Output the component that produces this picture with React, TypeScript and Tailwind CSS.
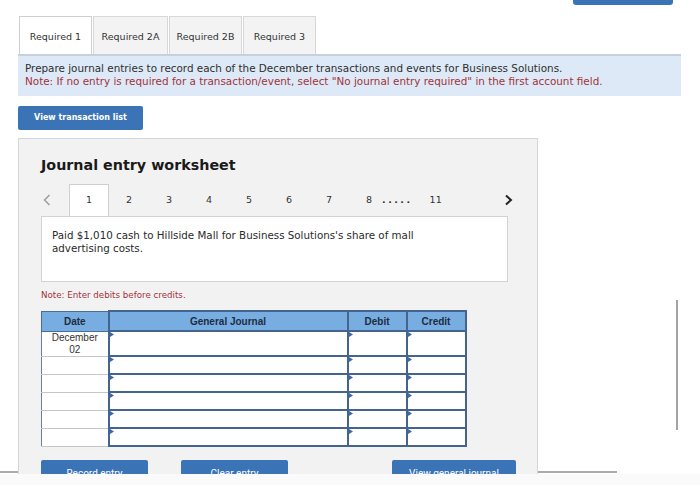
import React from "react";

const tabs = ["Required 1", "Required 2A", "Required 2B", "Required 3"];
const tabWidths = ["w-[73px]", "w-[75px]", "w-[73px]", "w-[73px]"];

function Marker() {
  return (
    <svg className="absolute left-0 top-0" width="4" height="5" viewBox="0 0 4 5">
      <path d="M0 0 L4 2.5 L0 5 Z" fill="#3b6aa8" />
    </svg>
  );
}

function InputCell({ h }: { h: string }) {
  return (
    <td className={`relative border-2 border-[#45648d] bg-white p-0 ${h}`}>
      <Marker />
    </td>
  );
}

export default function App() {
  const rows = [
    { h: "h-[25px]", date: true },
    { h: "h-[18px]", date: false },
    { h: "h-[18px]", date: false },
    { h: "h-[18px]", date: false },
    { h: "h-[18px]", date: false },
    { h: "h-[18px]", date: false },
  ];

  return (
    <div className="w-[700px] h-[485px] bg-white overflow-hidden font-['DejaVu_Sans',Verdana,sans-serif] text-[#333]">
      <div className="relative h-[474px] overflow-hidden">
        {/* background rules */}
        <div className="absolute left-0 top-[471px] w-[617px] h-[2px] bg-[#ababab]" />
        <div className="absolute left-[676px] top-[300px] w-[2px] h-[130px] bg-[#a3a3a3]" />

        {/* top right button stub */}
        <div className="flex justify-end pr-[27px]">
          <div className="w-[100px] h-[5px] bg-[#3a73b6] rounded-b-[3px]" />
        </div>

        {/* Tabs */}
        <div className="flex gap-[1px] pl-[19px] mt-[11px]">
          {tabs.map((t, i) => (
            <div
              key={t}
              className={`${tabWidths[i]} h-[38px] flex items-center justify-center pt-[3px] text-[9.5px] border border-b-0 ${
                i === 0 ? "bg-white border-[#cfcfcf]" : "bg-[#f3f3f3] border-[#d8d8d8]"
              }`}
            >
              {t}
            </div>
          ))}
        </div>

        {/* Instructions */}
        <div className="ml-[18px] w-[663px] h-[42px] bg-[#dde9f6] border-t-2 border-[#c7d1dc] pl-[7px] pt-[6px] text-[10.4px] leading-[13px]">
          <div className="text-[#2f2f2f]">
            Prepare journal entries to record each of the December transactions and events for Business Solutions.
          </div>
          <div className="text-[#a3323a]">
            Note: If no entry is required for a transaction/event, select "No journal entry required" in the first account field.
          </div>
        </div>

        <div className="ml-[18px] mt-[10px] w-[125px] h-[24px] bg-[#3a73b6] rounded-[2px] flex items-center justify-center text-white font-bold text-[8px]">
          View transaction list
        </div>

        {/* Worksheet panel */}
        <div className="relative z-10 ml-[18px] mt-[8px] w-[520px] h-[400px] bg-[#f2f2f2] border border-[#d6d6d6] pl-[22px] pt-[16px]">
          <div className="text-[14.3px] font-bold text-[#1a1a1a] leading-[20px]">Journal entry worksheet</div>

          {/* pager */}
          <div className="mt-[9px] flex items-stretch h-[32px] w-[475px] text-[9.5px] text-[#333]">
            <div className="w-[28px] flex items-center pl-[2px]">
              <svg width="8" height="12" viewBox="0 0 8 12">
                <polyline points="6.5,1 1.5,6 6.5,11" fill="none" stroke="#9a9a9a" strokeWidth="1.4" />
              </svg>
            </div>
            {["1", "2", "3", "4", "5", "6", "7"].map((n, i) => (
              <div
                key={n}
                className={`w-[40px] flex items-center justify-center ${
                  i === 0 ? "bg-white border border-b-0 border-[#cfcfcf]" : ""
                }`}
              >
                {n}
              </div>
            ))}
            <div className="ml-[17px] flex items-center">8</div>
            <div className="ml-[10px] flex items-center font-bold tracking-[2.5px]">.....</div>
            <div className="ml-[17px] flex items-center">11</div>
            <div className="ml-auto mr-[3px] flex items-center">
              <svg width="9" height="12" viewBox="0 0 9 12">
                <polyline points="2,1.5 7,6 2,10.5" fill="none" stroke="#222" strokeWidth="2" />
              </svg>
            </div>
          </div>

          <div className="w-[467px] h-[66px] bg-white border border-[#d2d2d2] px-[10px] pt-[12px] text-[10.3px] leading-[13px] text-[#2a2a2a]">
            Paid $1,010 cash to Hillside Mall for Business Solutions's share of mall
            <br />
            advertising costs.
          </div>

          <div className="mt-[8px] text-[8.7px] text-[#a3323a] leading-[10px]">Note: Enter debits before credits.</div>

          <table className="mt-[10px] border-collapse font-['Liberation_Sans',Arial,sans-serif] text-[10px]">
            <thead>
              <tr className="h-[20px] bg-[#78ade2] text-[#1e2c40]">
                <th className="w-[67px] border border-[#4b6c95] font-bold p-0">Date</th>
                <th className="w-[239px] border-2 border-[#45648d] font-bold p-0">General Journal</th>
                <th className="w-[59px] border-2 border-[#45648d] font-bold p-0">Debit</th>
                <th className="w-[59px] border-2 border-[#45648d] font-bold p-0">Credit</th>
              </tr>
            </thead>
            <tbody>
              {rows.map((r, i) => (
                <tr key={i}>
                  <td className={`border border-[#c6c6c6] border-l-[#6b7f99] bg-white p-0 text-center align-top leading-[12px] text-[#333] ${r.h}`}>
                    {r.date ? (
                      <>
                        December
                        <br />
                        02
                      </>
                    ) : null}
                  </td>
                  <InputCell h={r.h} />
                  <InputCell h={r.h} />
                  <InputCell h={r.h} />
                </tr>
              ))}
            </tbody>
          </table>

          <div className="mt-[13px] flex font-['Roboto',sans-serif] text-[10px] text-white">
            <div className="w-[107px] h-[26px] bg-[#3a73b6] rounded-[2px] flex items-center justify-center">Record entry</div>
            <div className="ml-[33px] w-[107px] h-[26px] bg-[#3a73b6] rounded-[2px] flex items-center justify-center">Clear entry</div>
            <div className="ml-[104px] w-[124px] h-[26px] bg-[#3a73b6] rounded-[2px] flex items-center justify-center">View general journal</div>
          </div>
        </div>
      </div>
      <div className="h-[11px] bg-[#fafafa]" />
    </div>
  );
}
